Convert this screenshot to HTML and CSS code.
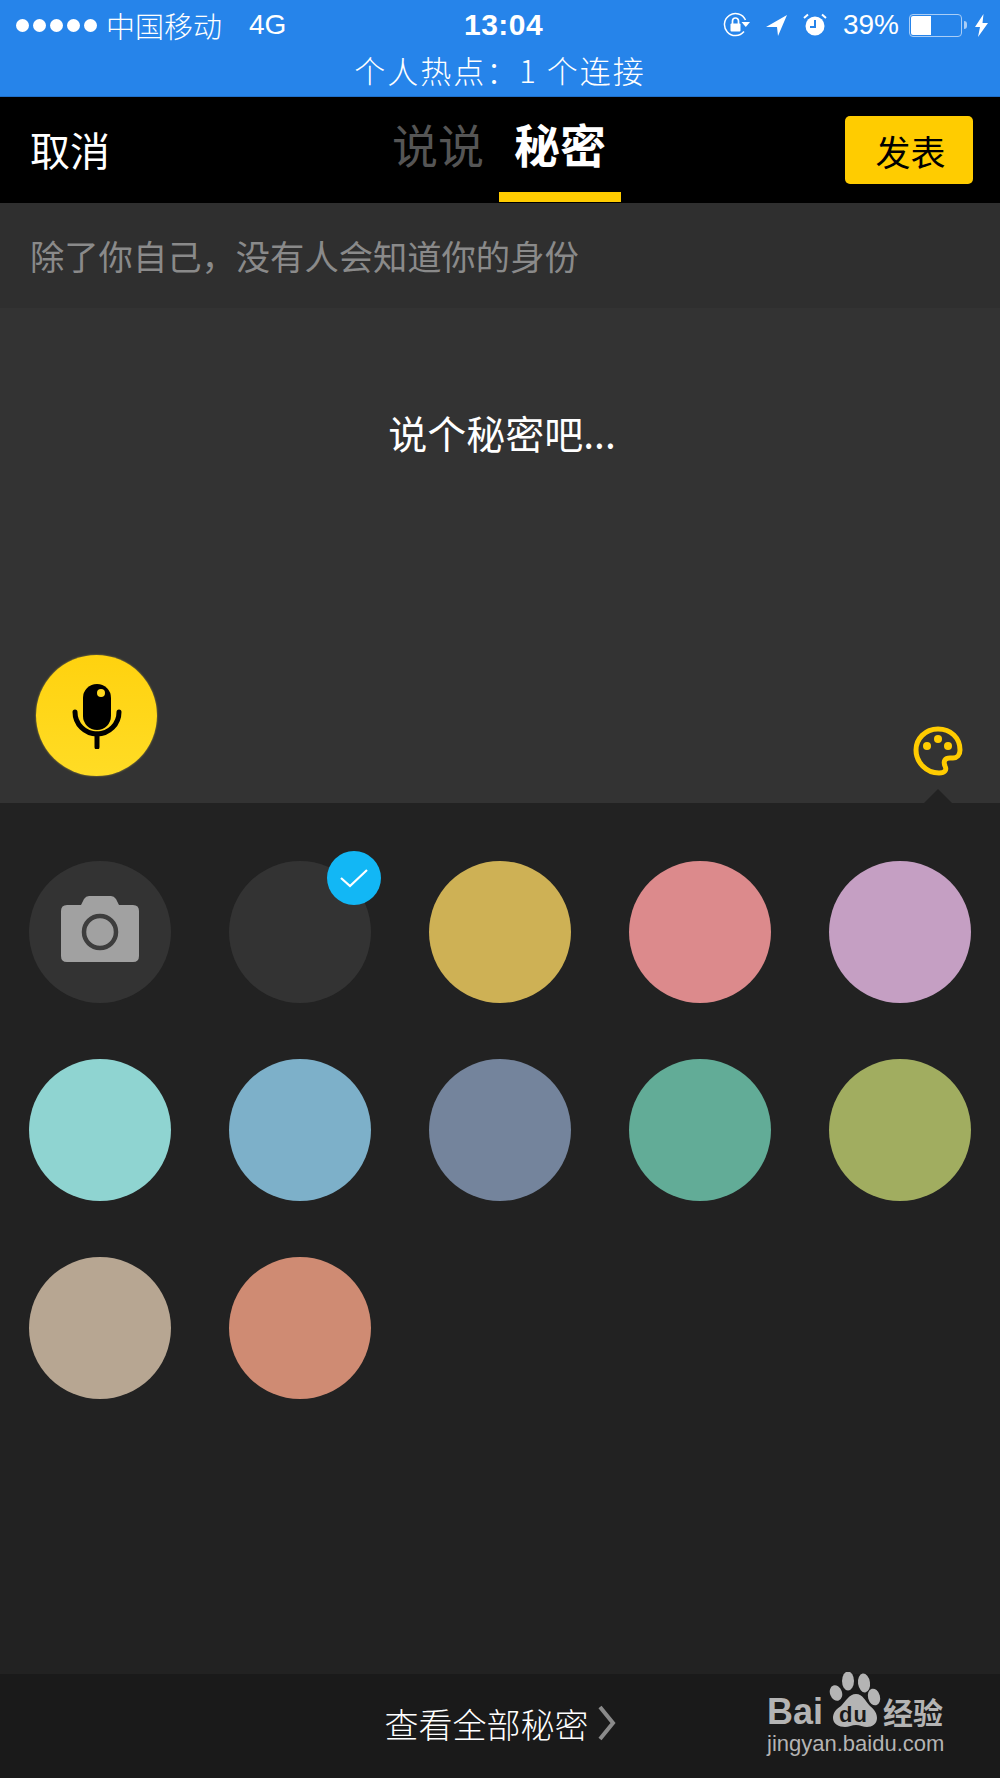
FILE: index.html
```html
<!DOCTYPE html>
<html lang="zh-CN">
<head>
    <meta charset="UTF-8">
    <meta name="viewport" content="width=device-width, initial-scale=1.0">
    <title>说个秘密吧</title>
    <link rel="stylesheet" href="styles.css">
</head>
<body>
    <div class="status">
        <div class="status-top">
            <div class="status-left">
                <span class="dots"><i></i><i></i><i></i><i></i><i></i></span>
                <span class="carrier">中国移动</span>
                <span class="net">4G</span>
            </div>
            <div class="status-time">13:04</div>
            <div class="status-right">
                <svg class="ico-lock" width="28" height="26" viewBox="0 0 28 26">
                    <path d="M22.500 8A11 11 0 1 0 21 19.500" fill="none" stroke="#fff" stroke-width="1.500"/>
                    <path d="M18.500 10H27l-4.200 5z" fill="#fff"/>
                    <rect x="7.500" y="11.500" width="10" height="8" rx="1" fill="#fff"/>
                    <path d="M9.500 13V9a3 3 0 0 1 6 0v4" fill="none" stroke="#fff" stroke-width="1.700"/>
                </svg>
                <svg class="ico-loc" width="21" height="21" viewBox="0 0 21 21">
                    <path d="M21 0L0 12h11l1 9z" fill="#fff"/>
                </svg>
                <svg class="ico-alarm" width="24" height="24" viewBox="0 0 24 24">
                    <circle cx="12" cy="13" r="9.500" fill="#fff"/>
                    <path d="M1 5l4-3.500M23 5l-4-3.500" stroke="#fff" stroke-width="2"/>
                    <path d="M12 7v7H7" fill="none" stroke="#2684ea" stroke-width="2"/>
                </svg>
                <span class="percent">39%</span>
                <span class="battery"><span class="battery-fill"></span></span>
                <span class="battery-tip"></span>
                <svg class="ico-bolt" width="13" height="23" viewBox="0 0 13 23">
                    <path d="M8.500 0L0 13h5l-2 10 10-14H7.500z" fill="#fff"/>
                </svg>
            </div>
        </div>
        <div class="hotspot">个人热点：1 个连接</div>
    </div>

    <div class="nav">
        <a class="cancel" href="#">取消</a>
        <div class="tabs">
            <a href="#">说说</a>
            <a class="active" href="#">秘密</a>
        </div>
        <button class="publish">发表</button>
    </div>

    <div class="hint">除了你自己，没有人会知道你的身份</div>

    <div class="editor">
        <div class="placeholder">说个秘密吧...</div>
        <div class="editor-tools">
            <div class="mic">
                <svg width="50" height="66" viewBox="0 0 50 66">
                    <rect x="11" y="1" width="28" height="46" rx="14" fill="#000"/>
                    <circle cx="29" cy="10" r="4" fill="#ffd91f"/>
                    <path d="M3 29a22 22 0 0 0 44 0" fill="none" stroke="#000" stroke-width="5" stroke-linecap="round"/>
                    <path d="M25 51v13" stroke="#000" stroke-width="5" stroke-linecap="round"/>
                </svg>
            </div>
            <svg class="palette" width="50" height="50" viewBox="0 0 50 50">
                <path d="M25 3C12 3 3 13 3 24c0 12 10 23 23 23 6 0 8-3 6-7-2-5 0-8 5-8h3c4 0 7-3 7-8C47 12 38 3 25 3z" fill="none" stroke="#ffcc00" stroke-width="5"/>
                <circle cx="14" cy="20" r="4" fill="#ffcc00"/>
                <circle cx="25" cy="13" r="4" fill="#ffcc00"/>
                <circle cx="35" cy="20" r="4" fill="#ffcc00"/>
            </svg>
        </div>
    </div>

    <div class="panel">
        <div class="swatches">
            <div class="swatch swatch-camera">
                <svg class="camera" width="78" height="68" viewBox="0 0 78 68">
                    <path d="M6 10h14l3-6q2-3 5-3h22q3 0 5 3l3 6h14q6 0 6 6v45q0 6-6 6H6q-6 0-6-6V16q0-6 6-6z" fill="#a1a1a1"/>
                    <circle cx="39" cy="37" r="16" fill="none" stroke="#3d3d3d" stroke-width="4.500"/>
                </svg>
            </div>
            <div class="swatch swatch-current">
                <span class="check">
                    <svg width="30" height="22" viewBox="0 0 30 22">
                        <path d="M2 11l9 8L28 3" fill="none" stroke="#fff" stroke-width="2.200"/>
                    </svg>
                </span>
            </div>
            <div class="swatch c1"></div>
            <div class="swatch c2"></div>
            <div class="swatch c3"></div>
            <div class="swatch c4"></div>
            <div class="swatch c5"></div>
            <div class="swatch c6"></div>
            <div class="swatch c7"></div>
            <div class="swatch c8"></div>
            <div class="swatch c9"></div>
            <div class="swatch c10"></div>
        </div>
    </div>

    <div class="footer">
        <a class="all-link" href="#">查看全部秘密
            <svg width="18" height="36" viewBox="0 0 18 36">
                <path d="M2 2l13 16L2 34" fill="none" stroke="#8a8a8a" stroke-width="4"/>
            </svg>
        </a>
        <div class="watermark">
            <div class="wm-top">
                <span class="wm-bai">Bai</span>
                <svg class="wm-paw" width="54" height="58" viewBox="0 0 54 58">
                    <ellipse cx="7" cy="21" rx="6" ry="8" transform="rotate(-20 7 21)" fill="#b4b4b4"/>
                    <ellipse cx="19" cy="9" rx="6" ry="9.500" fill="#b4b4b4"/>
                    <ellipse cx="35" cy="11" rx="6" ry="9.500" transform="rotate(-8 35 11)" fill="#b4b4b4"/>
                    <ellipse cx="45" cy="25" rx="6" ry="8.500" transform="rotate(-15 45 25)" fill="#b4b4b4"/>
                    <path d="M27 22c7 0 9 7 14 12 5 4 7 8 7 12 0 6-5 9-10 9-4 0-7-2-11-2s-7 2-11 2c-6 0-12-3-12-9 0-5 3-9 8-12 5-5 8-12 15-12z" fill="#b4b4b4"/>
                </svg>
                <span class="wm-du">du</span>
                <span class="wm-cn">经验</span>
            </div>
            <div class="wm-url">jingyan.baidu.com</div>
        </div>
    </div>
</body>
</html>
```

FILE: styles.css
```css
body {
    font-family: "Noto Sans CJK SC", "Liberation Sans", sans-serif;
    margin: 0;
    padding: 0;
    width: 1000px;
    height: 1778px;
    display: flex;
    flex-direction: column;
    background-color: #222;
    color: #fff;
    overflow: hidden;
}
a {
    color: inherit;
    text-decoration: none;
}
.status {
    background-color: #2684ea;
    height: 96px;
    border-bottom: 1px solid #1f6fc9;
    flex-shrink: 0;
}
.status-top {
    height: 50px;
    display: flex;
    align-items: center;
    justify-content: space-between;
    padding: 0 12px 0 16px;
    position: relative;
    font-size: 27px;
}
.status-left {
    display: flex;
    align-items: center;
}
.dots {
    display: flex;
    gap: 4px;
    margin-right: 9px;
}
.dots i {
    display: block;
    width: 13px;
    height: 13px;
    border-radius: 50%;
    background-color: #fff;
}
.carrier {
    font-size: 29px;
    font-weight: 300;
}
.net {
    margin-left: 27px;
    font-family: "Liberation Sans", sans-serif;
    font-size: 28px;
}
.status-time {
    position: absolute;
    left: 464px;
    top: 6px;
    font-family: "Liberation Sans", sans-serif;
    font-size: 30px;
    letter-spacing: .5px;
    font-weight: bold;
    line-height: 38px;
}
.status-right {
    display: flex;
    align-items: center;
    font-family: "Liberation Sans", sans-serif;
}
.ico-lock {
    margin-right: 15px;
}
.ico-alarm {
    margin-left: 16px;
}
.percent {
    margin-left: 16px;
    font-size: 28px;
}
.battery {
    box-sizing: border-box;
    margin-left: 10px;
    width: 53px;
    height: 23px;
    border: 1px solid #a9cdf6;
    border-radius: 4px;
    padding: 1px;
    display: block;
}
.battery-fill {
    display: block;
    width: 20px;
    height: 100%;
    background-color: #fff;
    border-radius: 2px 0 0 2px;
}
.battery-tip {
    width: 3px;
    height: 8px;
    margin-left: 2px;
    background-color: #a9cdf6;
    border-radius: 0 3px 3px 0;
}
.ico-bolt {
    margin-left: 8px;
}
.hotspot {
    text-align: center;
    font-size: 31px;
    line-height: 40px;
    letter-spacing: 2px;
    font-weight: 300;
}
.nav {
    background-color: #000;
    height: 106px;
    flex-shrink: 0;
    position: relative;
    display: flex;
    align-items: center;
    justify-content: space-between;
    padding: 0 27px 0 30px;
}
.cancel {
    font-size: 40px;
    line-height: 50px;
    margin-top: -3px;
}
.tabs {
    position: absolute;
    left: 377px;
    top: 0;
    display: flex;
    height: 106px;
    font-size: 46px;
}
.tabs a {
    width: 122px;
    text-align: center;
    color: #555;
    line-height: 92px;
}
.tabs a.active {
    color: #fff;
    font-weight: 700;
    height: 95px;
    border-bottom: 10px solid #ffcc00;
}
.publish {
    width: 128px;
    height: 68px;
    border: none;
    border-radius: 5px;
    background-color: #ffcc00;
    color: #000;
    font-family: inherit;
    font-size: 35px;
    padding: 0 0 0 3px;
}
.hint {
    height: 105px;
    flex-shrink: 0;
    background-color: #2f2f2f;
    color: #8a8a8a;
    font-size: 34.3px;
    line-height: 105px;
    padding-left: 30px;
}
.editor {
    height: 495px;
    flex-shrink: 0;
    background-color: #333;
    display: flex;
    flex-direction: column;
    justify-content: space-between;
}
.placeholder {
    text-align: center;
    font-size: 39px;
    line-height: 50px;
    margin-top: 99px;
    padding-left: 4px;
}
.editor-tools {
    display: flex;
    justify-content: space-between;
    align-items: flex-end;
    padding: 0 36px 27px 36px;
    position: relative;
}
.mic {
    width: 121px;
    height: 121px;
    border-radius: 50%;
    background: linear-gradient(#ffd20f, #ffdc25);
    box-shadow: 0 0 2px rgba(255, 226, 58, .6);
    display: flex;
    align-items: center;
    justify-content: center;
}
.palette {
    margin-bottom: 0;
    margin-right: 1px;
}
.editor-tools::after {
    content: "";
    position: absolute;
    right: 48px;
    bottom: 0;
    border-left: 14px solid transparent;
    border-right: 14px solid transparent;
    border-bottom: 14px solid #222;
}
.panel {
    flex: 1;
    background-color: #222;
}
.swatches {
    display: grid;
    grid-template-columns: repeat(5, 142px);
    column-gap: 58px;
    row-gap: 56px;
    padding: 58px 0 0 29px;
}
.swatch {
    width: 142px;
    height: 142px;
    border-radius: 50%;
    position: relative;
    display: flex;
    align-items: center;
    justify-content: center;
}
.swatch-camera,
.swatch-current {
    background-color: #333;
}
.camera {
    margin-top: -6px;
}
.check {
    position: absolute;
    right: -10px;
    top: -10px;
    width: 54px;
    height: 54px;
    border-radius: 50%;
    background-color: #12b7f5;
    display: flex;
    align-items: center;
    justify-content: center;
}
.c1 { background-color: #ceb155; }
.c2 { background-color: #dc8a8c; }
.c3 { background-color: #c59fc3; }
.c4 { background-color: #8fd4d1; }
.c5 { background-color: #7db0c9; }
.c6 { background-color: #74849c; }
.c7 { background-color: #62ac97; }
.c8 { background-color: #a1ad60; }
.c9 { background-color: #b7a692; }
.c10 { background-color: #cf8b73; }
.footer {
    height: 104px;
    flex-shrink: 0;
    background-color: #1a1a1a;
    position: relative;
    display: flex;
    justify-content: center;
    align-items: center;
}
.all-link {
    display: flex;
    align-items: center;
    gap: 9px;
    font-size: 34px;
    font-weight: 300;
    margin-left: 0;
    margin-top: -6px;
}
.watermark {
    position: absolute;
    left: 767px;
    top: -2px;
    width: 180px;
    color: #b4b4b4;
}
.wm-top {
    height: 66px;
    position: relative;
}
.wm-bai {
    position: absolute;
    left: 0;
    top: 17px;
    font-family: "Liberation Sans", sans-serif;
    font-size: 36px;
    line-height: 46px;
    font-weight: bold;
}
.wm-paw {
    position: absolute;
    left: 62px;
    top: 0;
}
.wm-du {
    position: absolute;
    left: 72px;
    top: 32px;
    font-family: "Liberation Sans", sans-serif;
    font-size: 22px;
    letter-spacing: 1px;
    line-height: 22px;
    font-weight: bold;
    color: #1a1a1a;
}
.wm-cn {
    position: absolute;
    left: 116px;
    top: 19px;
    font-size: 30px;
    line-height: 40px;
    font-weight: 700;
    white-space: nowrap;
}
.wm-url {
    font-family: "Liberation Sans", sans-serif;
    font-size: 22px;
    line-height: 26px;
    white-space: nowrap;
    margin-top: -7px;
}
```
